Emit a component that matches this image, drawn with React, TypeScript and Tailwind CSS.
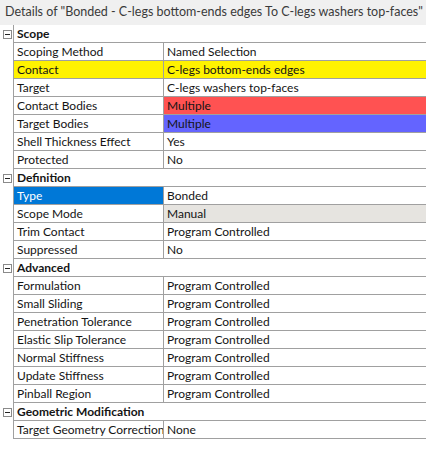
import React from 'react';

interface Row {
  label: string;
  value: string;
  rowBg?: string;
  labelBg?: string;
  labelText?: string;
  valueBg?: string;
}

interface Group {
  title: string;
  rows: Row[];
}

const groups: Group[] = [
  {
    title: 'Scope',
    rows: [
      { label: 'Scoping Method', value: 'Named Selection' },
      { label: 'Contact', value: 'C-legs bottom-ends edges', rowBg: 'bg-[#fff200]' },
      { label: 'Target', value: 'C-legs washers top-faces' },
      { label: 'Contact Bodies', value: 'Multiple', valueBg: 'bg-[#ff5252]' },
      { label: 'Target Bodies', value: 'Multiple', valueBg: 'bg-[#6464ff]' },
      { label: 'Shell Thickness Effect', value: 'Yes' },
      { label: 'Protected', value: 'No' },
    ],
  },
  {
    title: 'Definition',
    rows: [
      { label: 'Type', value: 'Bonded', labelBg: 'bg-[#0078d7]', labelText: 'text-white' },
      { label: 'Scope Mode', value: 'Manual', valueBg: 'bg-[#e6e4e0]' },
      { label: 'Trim Contact', value: 'Program Controlled' },
      { label: 'Suppressed', value: 'No' },
    ],
  },
  {
    title: 'Advanced',
    rows: [
      { label: 'Formulation', value: 'Program Controlled' },
      { label: 'Small Sliding', value: 'Program Controlled' },
      { label: 'Penetration Tolerance', value: 'Program Controlled' },
      { label: 'Elastic Slip Tolerance', value: 'Program Controlled' },
      { label: 'Normal Stiffness', value: 'Program Controlled' },
      { label: 'Update Stiffness', value: 'Program Controlled' },
      { label: 'Pinball Region', value: 'Program Controlled' },
    ],
  },
  {
    title: 'Geometric Modification',
    rows: [{ label: 'Target Geometry Correction', value: 'None' }],
  },
];

function MinusBox() {
  return (
    <svg width="9" height="9" viewBox="0 0 9 9">
      <rect x="0.5" y="0.5" width="8" height="8" fill="white" stroke="#8a8a8a" />
      <line x1="2" y1="4.5" x2="7" y2="4.5" stroke="#222" />
    </svg>
  );
}

function Grip() {
  return (
    <svg width="12" height="6" viewBox="0 0 12 6" className="ml-[5px] shrink-0">
      {[0, 1, 2, 3, 4, 5].map((i) => (
        <React.Fragment key={i}>
          <rect x={i * 2} y={0} width="1" height="1" fill="#a8a8a8" />
          <rect x={i * 2 + 1} y={2} width="1" height="1" fill="#a8a8a8" />
          <rect x={i * 2} y={4} width="1" height="1" fill="#a8a8a8" />
        </React.Fragment>
      ))}
    </svg>
  );
}

export default function App() {
  return (
    <div
      className="w-[426px] h-[469px] bg-white text-[12px] text-[#141414] overflow-hidden"
      style={{ fontFamily: 'Lato, "Open Sans", sans-serif' }}
    >
      <div className="h-[25px] bg-[#f0f0f0] flex items-center pl-[5px] text-[#3a3a3a] whitespace-nowrap text-[12.5px]">
        <span>Details of "Bonded - C-legs bottom-ends edges To C-legs washers top-faces"</span>
        <Grip />
      </div>
      <div className="flex flex-col">
        {groups.map((g) => (
          <div key={g.title} className="flex flex-col">
            <div className="flex h-[18px]">
              <div className="w-[13px] flex items-center justify-center pl-[1px]">
                <MinusBox />
              </div>
              <div className="flex-1 border-l border-b border-[#a0a0a0] pl-[3px] font-bold leading-[17px]">
                {g.title}
              </div>
            </div>
            {g.rows.map((r) => (
              <div key={r.label} className="flex h-[18px]">
                <div className="w-[13px]" />
                <div className={`flex flex-1 border-l border-b border-[#a0a0a0] leading-[17px] ${r.rowBg ?? ''}`}>
                  <div
                    className={`w-[150px] border-r border-[#a0a0a0] pl-[3px] whitespace-nowrap overflow-hidden ${r.labelBg ?? ''} ${r.labelText ?? ''}`}
                  >
                    {r.label}
                  </div>
                  <div className={`flex-1 pl-[3px] whitespace-nowrap ${r.valueBg ?? ''}`}>{r.value}</div>
                </div>
              </div>
            ))}
          </div>
        ))}
      </div>
    </div>
  );
}
